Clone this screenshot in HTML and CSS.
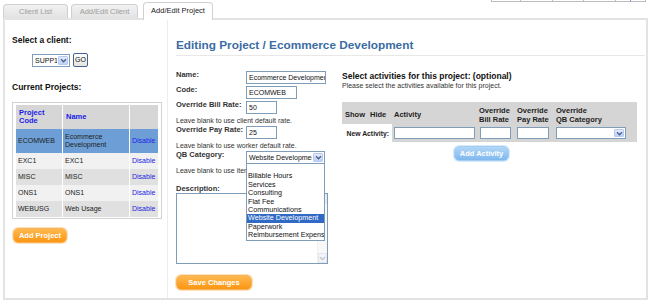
FILE: index.html
```html
<!DOCTYPE html>
<html>
<head>
<meta charset="utf-8">
<title>Add/Edit Project</title>
<link rel="stylesheet" href="styles.css">
</head>
<body>
<div class="topstrip"><span class="c1"></span><span class="c2"></span><span class="c3"></span><span class="c4"></span><span class="c5"></span><span class="c6"></span></div>
<div class="tabs">
  <div class="tab t1">Client List</div>
  <div class="tab t2">Add/Edit Client</div>
  <div class="tab active">Add/Edit Project</div>
</div>
<div class="panel">
  <aside class="left">
    <h2 class="lh">Select a client:</h2>
    <div class="client-row">
      <div class="sel sel-client"><span class="sel-text">SUPP1</span><span class="sel-btn"><svg width="7" height="5" viewBox="0 0 7 5"><path d="M1 1.2 L3.5 3.7 L6 1.2" fill="none" stroke="#4d6185" stroke-width="1.4"/></svg></span></div>
      <span class="go">GO</span>
    </div>
    <h2 class="lh cp">Current Projects:</h2>
    <div class="projbox">
      <table class="proj">
        <colgroup><col class="pc1"><col class="pc2"><col class="pc3"></colgroup>
        <tr class="hd"><th>Project Code</th><th>Name</th><th></th></tr>
        <tr class="cur"><td>ECOMWEB</td><td>Ecommerce Development</td><td><a>Disable</a></td></tr>
        <tr class="lt"><td>EXC1</td><td>EXC1</td><td><a>Disable</a></td></tr>
        <tr class="dk"><td>MISC</td><td>MISC</td><td><a>Disable</a></td></tr>
        <tr class="lt"><td>ONS1</td><td>ONS1</td><td><a>Disable</a></td></tr>
        <tr class="dk"><td>WEBUSG</td><td>Web Usage</td><td><a>Disable</a></td></tr>
      </table>
    </div>
    <div class="btn orange add-project">Add Project</div>
  </aside>
  <main class="main">
    <h1>Editing Project / Ecommerce Development</h1>
    <div class="cols">
      <div class="form">
        <div class="frow"><span class="flabel">Name:</span><span class="inp w80">Ecommerce Development</span></div>
        <div class="frow"><span class="flabel">Code:</span><span class="inp w51">ECOMWEB</span></div>
        <div class="frow"><span class="flabel">Override Bill Rate:</span><span class="inp w31">50</span></div>
        <div class="help">Leave blank to use client default rate.</div>
        <div class="frow"><span class="flabel">Override Pay Rate:</span><span class="inp w31">25</span></div>
        <div class="help">Leave blank to use worker default rate.</div>
        <div class="frow"><span class="flabel">QB Category:</span>
          <div class="qbwrap">
            <div class="sel sel-qb"><span class="sel-text">Website Development</span><span class="sel-btn"><svg width="7" height="5" viewBox="0 0 7 5"><path d="M1 1.2 L3.5 3.7 L6 1.2" fill="none" stroke="#4d6185" stroke-width="1.4"/></svg></span></div>
            <ul class="droplist">
              <li>&nbsp;</li>
              <li>Billable Hours</li>
              <li>Services</li>
              <li>Consulting</li>
              <li>Flat Fee</li>
              <li>Communications</li>
              <li class="on">Website Development</li>
              <li>Paperwork</li>
              <li>Reimbursement Expense</li>
            </ul>
          </div>
        </div>
        <div class="help">Leave blank to use item default category.</div>
        <div class="dlabel">Description:</div>
        <div class="textarea">
          <div class="ta-body"></div>
          <div class="ta-scroll">
            <span class="sb-btn"><svg width="7" height="5" viewBox="0 0 7 5"><path d="M1 3.7 L3.5 1.2 L6 3.7" fill="none" stroke="#b8bfcc" stroke-width="1.2"/></svg></span>
            <span class="sb-btn"><svg width="7" height="5" viewBox="0 0 7 5"><path d="M1 1.2 L3.5 3.7 L6 1.2" fill="none" stroke="#b8bfcc" stroke-width="1.2"/></svg></span>
          </div>
        </div>
        <div class="btn orange save">Save Changes</div>
      </div>
      <div class="acts">
        <h2 class="ah">Select activities for this project: (optional)</h2>
        <div class="asub">Please select the activities available for this project.</div>
        <div class="agrid">
          <div class="h hs">Show</div>
          <div class="h hh">Hide</div>
          <div class="h ha">Activity</div>
          <div class="h hb">Override<br>Bill Rate</div>
          <div class="h hp">Override<br>Pay Rate</div>
          <div class="h hq">Override<br>QB Category</div>
          <div class="nl">New Activity:</div>
          <div class="rc ra"><span class="inp w81 s12"></span></div>
          <div class="rc rb"><span class="inp w31 s12"></span></div>
          <div class="rc rp"><span class="inp w32 s12"></span></div>
          <div class="rc rq"><div class="sel sel-act"><span class="sel-text"></span><span class="sel-btn"><svg width="7" height="5" viewBox="0 0 7 5"><path d="M1 1.2 L3.5 3.7 L6 1.2" fill="none" stroke="#4d6185" stroke-width="1.4"/></svg></span></div></div>
        </div>
        <div class="btn blue add-activity">Add Activity</div>
      </div>
    </div>
  </main>
</div>
</body>
</html>
```
FILE: styles.css
```css
* { box-sizing: border-box; }
html, body { margin: 0; padding: 0; background: #fff; }
body {
  font-family: "Liberation Sans", Arial, sans-serif;
  color: #222;
  width: 650px;
  height: 306px;
  overflow: hidden;
}

/* cut-off fragment at the very top */
.topstrip { height: 2px; display: flex; margin-left: 491px; }
.topstrip span { height: 2px; border-left: 1px solid #bcbcbc; border-bottom: 1px solid #bcbcbc; }
.topstrip .c1 { width: 29px; }
.topstrip .c2 { width: 32px; }
.topstrip .c3 { width: 31px; }
.topstrip .c4 { width: 32px; }
.topstrip .c5 { width: 15px; }
.topstrip .c6 { width: 16px; border-left-color: #6f9ad8; border-right: 1px solid #bcbcbc; }

/* tabs */
.tabs { display: flex; align-items: flex-end; height: 16px; padding-left: 3px; }
.tab {
  height: 14px;
  border: 1px solid #d0d0d0;
  border-bottom: none;
  border-radius: 4px 4px 0 0;
  background: linear-gradient(#f1f1f1, #e3e3e3);
  color: #9c9c9c;
  font-size: 7.5px;
  line-height: 13px;
  text-align: center;
}
.t1 { width: 65px; margin-right: 3px; }
.t2 { width: 67px; margin-right: 5px; }
.tab.active {
  width: 70px;
  height: 18px;
  background: #fff;
  color: #222;
  margin-bottom: -2px;
  position: relative;
  z-index: 1;
  line-height: 16px;
}

/* panel */
.panel {
  margin-left: 3px;
  width: 645px;
  height: 282px;
  border: 2px solid #e3e3e3;
  display: flex;
}

.left {
  width: 163px;
  flex: none;
  border-right: 1px solid #ededed;
  padding: 15px 0 0 7px;
}
.lh { margin: 0; font-size: 8.5px; line-height: 10px; font-weight: bold; color: #111; }
.client-row { display: flex; align-items: center; gap: 3px; margin-top: 8px; padding-left: 20px; }
.cp { margin-top: 15px; }

.sel {
  display: flex;
  height: 13px;
  border: 1px solid #7f9db9;
  background: #fff;
  overflow: hidden;
}
.sel-text {
  flex: 1;
  font-size: 7px;
  line-height: 11px;
  padding-left: 2px;
  white-space: nowrap;
  overflow: hidden;
  color: #111;
}
.sel-btn {
  width: 10px;
  flex: none;
  margin: 1px;
  border: 1px solid #b7c9f2;
  border-radius: 1px;
  background: linear-gradient(#e3ebfd, #bcd0f9);
  display: flex;
  align-items: center;
  justify-content: center;
}
.sel-btn svg { display: block; }
.sel-client { width: 38px; }
.go {
  width: 15px;
  height: 14px;
  border: 1px solid #45638f;
  border-radius: 2px;
  background: linear-gradient(#ffffff, #e4e4dc);
  font-size: 7px;
  line-height: 12px;
  text-align: center;
  color: #111;
}

.projbox {
  margin-top: 10px;
  width: 150px;
  border: 1px solid #d2d2d2;
  padding: 2px 2px 1px 2px;
}
.proj { width: 144px; table-layout: fixed; border-collapse: separate; border-spacing: 1px 0; font-size: 7px; }
.pc1 { width: 46px; }
.pc2 { width: 66px; }
.pc3 { width: 28px; }
.proj th, .proj td { padding: 0 2px; vertical-align: middle; text-align: left; line-height: 8.5px; color: #222; }
.proj th { color: #1c1ce8; font-weight: bold; font-size: 7.5px; padding-left: 3px; }
.proj tr { height: 16px; }
.proj tr.hd, .proj tr.cur { height: 24px; }
.proj tr.hd th { background: #d6d6d6; }
.proj tr.cur td { background: #6d9fd6; }
.proj tr.lt td { background: #f1f1f1; }
.proj tr.dk td { background: #e0e0e0; }
.proj a { color: #2323e6; }

.btn {
  border-radius: 5px;
  color: #fff;
  font-weight: bold;
  font-size: 7.5px;
  text-align: center;
}
.orange {
  background: linear-gradient(#ffb950, #fb9512);
  border: 1px solid #f6b35c;
  box-shadow: 0 0 0 1px #fde1b8;
}
.blue {
  background: linear-gradient(#b2d6f7, #7fb8ee);
  border: 1px solid #a2cdf3;
  box-shadow: 0 0 0 1px #d9ebfb;
}
.add-project { margin: 9px 0 0 1px; width: 54px; height: 15px; line-height: 13px; }

/* main */
.main { flex: 1; padding: 18px 1px 0 8px; }
.main h1 {
  margin: 0;
  font-size: 11.8px;
  line-height: 14px;
  font-weight: bold;
  color: #3a6ca3;
  padding-bottom: 3px;
  border-bottom: 1px solid #e8e8e8;
}
.cols { display: flex; margin-top: 15px; }
.form { width: 152px; flex: none; }
.frow { display: flex; align-items: flex-start; height: 13px; }
.frow + .frow { margin-top: 2px; }
.flabel { width: 70px; flex: none; font-weight: bold; font-size: 7.5px; line-height: 8px; color: #333; white-space: nowrap; }
.inp {
  display: block;
  height: 13px;
  border: 1px solid #7f9db9;
  background: #fff;
  font-size: 7px;
  line-height: 11px;
  padding: 0 1px 0 2px;
  white-space: nowrap;
  overflow: hidden;
  color: #111;
}
.w80 { width: 80px; }
.w51 { width: 51px; }
.w31 { width: 31px; }
.w32 { width: 32px; }
.w81 { width: 81px; }
.s12 { height: 12px; }
.help { font-size: 7px; line-height: 9px; color: #333; margin: 2px 0 1px; white-space: nowrap; overflow: hidden; }

.qbwrap { position: relative; width: 79px; }
.sel-qb { width: 79px; }
.droplist {
  position: absolute;
  left: 0;
  top: 12px;
  width: 79px;
  margin: 0;
  padding: 0;
  list-style: none;
  background: #fff;
  border: 1px solid #7f9db9;
  z-index: 2;
}
.droplist li {
  font-size: 7.2px;
  line-height: 8.4px;
  height: 8.4px;
  padding-left: 1px;
  white-space: nowrap;
  overflow: hidden;
  color: #111;
}
.droplist li.on { background: #316ac5; color: #fff; }

.dlabel { margin-top: 10px; font-weight: bold; font-size: 7.5px; line-height: 8px; color: #333; }
.textarea {
  display: flex;
  width: 152px;
  height: 71px;
  border: 1px solid #7f9db9;
  background: #fff;
}
.ta-body { flex: 1; }
.ta-scroll {
  width: 10px;
  flex: none;
  background: #f8f8f6;
  border-left: 1px solid #f0f0ee;
  display: flex;
  flex-direction: column;
  justify-content: space-between;
}
.sb-btn {
  height: 10px;
  border: 1px solid #e3e6ee;
  background: #f3f4f8;
  display: flex;
  align-items: center;
  justify-content: center;
}
.save { margin-top: 11px; width: 76px; height: 15px; line-height: 13px; }

/* activities */
.acts { width: 295px; margin-left: 14px; flex: none; }
.ah { margin: 0; font-size: 8.5px; line-height: 10px; font-weight: bold; color: #111; white-space: nowrap; }
.asub { font-size: 7px; line-height: 9px; color: #333; white-space: nowrap; }
.agrid {
  display: grid;
  grid-template-columns: 25px 25px 85px 37px 39px 84px;
  grid-template-rows: 22px 18px;
  width: 295px;
  margin-top: 12px;
}
.agrid .h {
  background: #d5d5d5;
  display: flex;
  align-items: center;
  padding-top: 3px;
  font-weight: bold;
  font-size: 7.5px;
  line-height: 9px;
  color: #222;
  white-space: nowrap;
}
.hs, .hh, .hp, .hq { padding-left: 3px; }
.ha, .hb { padding-left: 2px; }
.nl {
  grid-column: span 2;
  background: #fff;
  display: flex;
  align-items: center;
  justify-content: flex-end;
  padding-right: 3px;
  font-weight: bold;
  font-size: 6.8px;
  color: #222;
  white-space: nowrap;
}
.rc { background: #d5d5d5; display: flex; align-items: center; }
.ra { padding-left: 2px; }
.rb, .rp, .rq { padding-left: 3px; }
.sel-act { width: 70px; height: 12px; }
.add-activity { margin: 4px 0 0 112px; width: 55px; height: 15px; line-height: 13px; }
```
